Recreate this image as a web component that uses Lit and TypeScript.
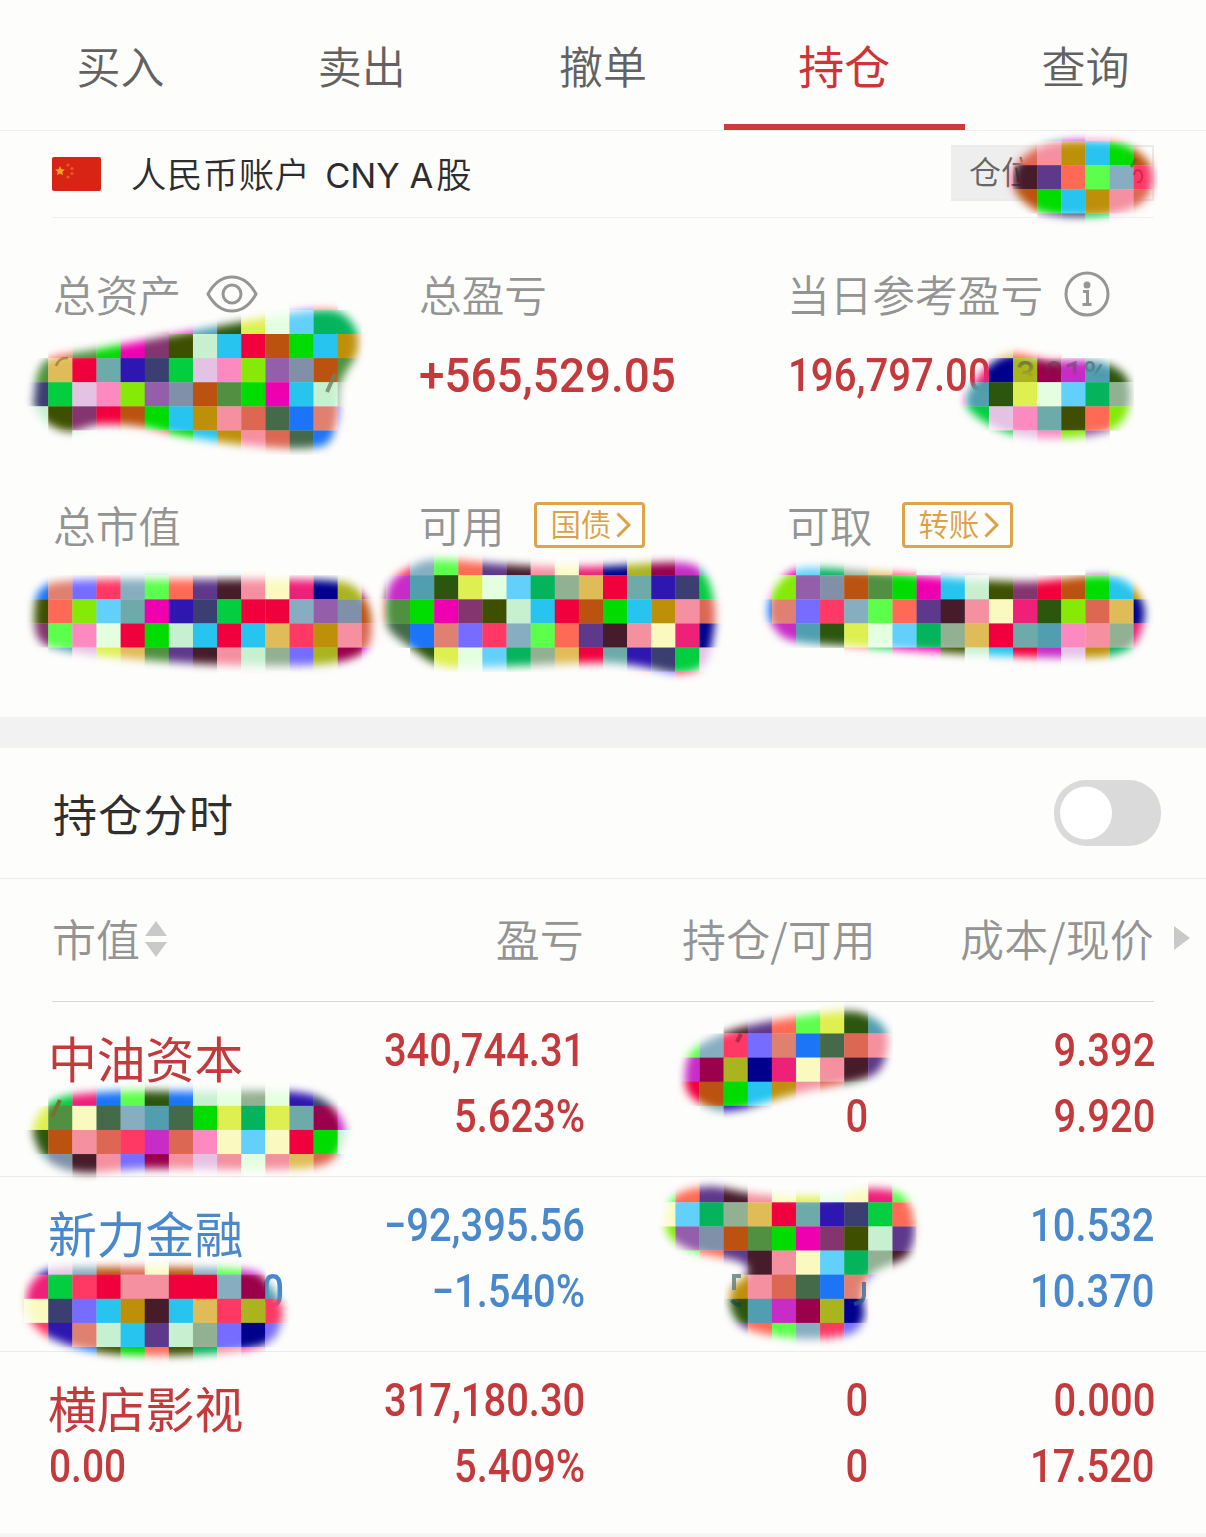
import { LitElement, html, svg, css } from "lit";
import { customElement, property } from "lit/decorators.js";

const CELL = 24.12;
const ROW_OFFSET = -3.7;

const PALETTE: Record<string, string> = {
  a: "#f0003c", b: "#bc5210", c: "#00dc00", d: "#ee00b0", e: "#84346e", f: "#3e5000",
  g: "#c6f0d0", h: "#26c4ee", i: "#be900a", j: "#f490a0", k: "#dc6854", l: "#446a4a",
  m: "#1c74f6", n: "#e08070", o: "#766cff", p: "#ff3864", q: "#86aec0", r: "#5cff4c",
  s: "#ff6a56", t: "#5e388a", u: "#461c2a", v: "#fafac0", w: "#ee2078", x: "#00008c",
  y: "#aab41e", z: "#9a004c", A: "#c82cc6", B: "#509eb0", C: "#2c560e", D: "#def050",
  E: "#e4ffe0", F: "#62d0fa", G: "#04b45c", H: "#92b092", I: "#e0bc58", J: "#6eaaaa",
  K: "#2e16b0", L: "#3a3e70", M: "#02ce40", N: "#e4c2e4", O: "#fc8ac0", P: "#84ea06",
  Q: "#945eaa", R: "#8090a8", S: "#509040",
};

interface Patch { col: number; row: number; cells: string[]; outline: number[][]; }

const PATCHES: Patch[] = [
  { col: 1, row: 12, cells: [
      "...........os..", "....vzABCDEFGG.", ".sScdefghabchij", "SIaJKLMNOPQRbSc",
      "LMNOPQRbScdhgH.", "gfeabchijklmno.", ".fghskchijklmo."],
    outline: [[28,394],[32,370],[48,352],[100,342],[200,323],[260,312],[310,304],[342,306],[362,327],[363,355],[347,385],[344,420],[332,448],[300,455],[240,451],[180,442],[140,433],[100,431],[70,438],[43,428],[28,408]] },
  { col: 41, row: 5, cells: [".qBAOs.", "kkjihcb", "putsrqp", "pbchijk", "..tLMNj"],
    outline: [[1006,178],[1016,155],[1045,138],[1085,134],[1125,138],[1152,156],[1159,180],[1150,204],[1120,219],[1075,223],[1035,217],[1012,198]] },
  { col: 39, row: 14, cells: ["..Isp...", "wwxyzABC", "ABCDEFGH", "MMNOJfsP", "..MNOPQ."],
    outline: [[960,395],[983,362],[1013,347],[1050,354],[1100,355],[1132,374],[1135,410],[1117,434],[1070,444],[1010,440],[968,418]] },
  { col: 1, row: 23, cells: ["..DEFGHIhI.....", "mnopqrstujvwxyz", "fsPFJdKLMaaqQRb", "erOEacghahIpijk", "NBNDIStujgHoyzA", ".......u.jgHo.."],
    outline: [[28,612],[36,585],[70,574],[200,573],[330,574],[365,588],[378,620],[370,655],[330,670],[250,672],[150,667],[60,656],[33,642]] },
  { col: 15, row: 22, cells: ["..m............", ".pqrstujvwxyzAB", "uABCDEFGHIaJKLM", "bScdefghabchijk", "llmnopqrstujvwx", "..CDEFGHIaJKLMN", "...........sopk"],
    outline: [[379,605],[386,578],[410,560],[440,553],[520,559],[600,560],[680,556],[709,569],[721,605],[719,640],[709,669],[680,680],[640,673],[600,669],[500,673],[440,672],[403,650],[383,632]] },
  { col: 31, row: 23, cells: [".dFGHIpgottt..QPM", "OPQRbScdhgfeabchi", "mnopqrstujvwCPkIx", "AABCDEFGHIaJBOjHw", "....sMddfghaANiGo"],
    outline: [[762,605],[773,580],[800,562],[870,565],[960,572],[1030,575],[1100,569],[1134,579],[1151,610],[1140,647],[1110,662],[1050,664],[960,660],[860,653],[790,647],[766,627]] },
  { col: 1, row: 44, cells: ["...mrCmgEHEKL.", ".MwmrCmgEHEKL.", "DSvlqBlcDGDJzA", "CbjkpAkOvFvacg", "JRujozjNjEjIko", ".Rujozj......."],
    outline: [[27,1135],[34,1110],[60,1091],[120,1085],[200,1085],[290,1085],[330,1096],[351,1125],[346,1152],[325,1171],[270,1176],[150,1175],[80,1179],[43,1165]] },
  { col: 28, row: 41, cells: ["......DC.", "..utsrDCB", "rqponmlkj", "AzyxwvjutI".slice(0, 9), "abchijklm", ".JKL....."],
    outline: [[679,1070],[689,1045],[730,1024],[780,1013],[840,1005],[870,1009],[892,1028],[892,1058],[872,1083],[800,1099],[740,1116],[710,1115],[683,1097]] },
  { col: 27, row: 48, cells: ["rst......wr.", "rstujvDEvwr.", "vFGHIaJKLMsI", "PQRbScdefgtj", "rrstujvFGHu.", "...ijklmnoo.", "...CBAzyxj..", "...tsrqpoo.."],
    outline: [[660,1215],[672,1190],[710,1180],[760,1188],[830,1190],[870,1182],[907,1190],[921,1225],[912,1260],[880,1276],[869,1291],[870,1320],[852,1340],[800,1345],[745,1335],[725,1312],[726,1285],[740,1269],[690,1257],[664,1240]] },
  { col: 0, row: 52, cells: [".KNqbkvbqrA.", "ywMpajjaaqzB", "IvLohiuhIpyp", "ppKnghtgHoxo", "..mmfcsfGjw."],
    outline: [[20,1305],[25,1281],[48,1263],[100,1261],[170,1261],[250,1264],[273,1279],[289,1310],[277,1344],[240,1357],[170,1362],[100,1359],[50,1345],[26,1326]] },
];

/* Closed Catmull-Rom curve through the outline points. */
function smooth(points: number[][]): string {
  const n = points.length;
  let d = `M${points[0][0]} ${points[0][1]}`;
  for (let i = 0; i < n; i++) {
    const p0 = points[(i - 1 + n) % n], p1 = points[i], p2 = points[(i + 1) % n], p3 = points[(i + 2) % n];
    d += `C${p1[0] + (p2[0] - p0[0]) / 6} ${p1[1] + (p2[1] - p0[1]) / 6} ${p2[0] - (p3[0] - p1[0]) / 6} ${p2[1] - (p3[1] - p1[1]) / 6} ${p2[0]} ${p2[1]}`;
  }
  return d + "Z";
}

@customElement("mosaic-layer")
class MosaicLayer extends LitElement {
  static styles = css`
    :host { display: block; pointer-events: none; }
    svg { display: block; }
    .ghost { font: 500 35px Roboto, "Liberation Sans", sans-serif; }
  `;
  render() {
    return html`<svg width="1206" height="1537" viewBox="0 0 1206 1537">
      <defs>
        <filter id="feather" filterUnits="userSpaceOnUse" x="0" y="0" width="1206" height="1537" color-interpolation-filters="sRGB"><feGaussianBlur stdDeviation="4.5" /></filter>
        <linearGradient id="fade" x1="0" y1="0" x2="0" y2="1">
          <stop offset="0.15" stop-color="#444" stop-opacity="0.6" /><stop offset="0.58" stop-color="#444" stop-opacity="0" />
        </linearGradient>
      </defs>
      ${PATCHES.map((p, n) => svg`
        <mask id="m${n}" maskUnits="userSpaceOnUse" x="0" y="0" width="1206" height="1537">
          <rect width="1206" height="1537" fill="#000" />
          <path d=${smooth(p.outline)} fill="#fff" stroke="#000" stroke-width="13" filter="url(#feather)" />
        </mask>
        <g mask="url(#m${n})">
          ${p.cells.map((line, r) => [...line].map((key, c) => key === "." ? null : svg`
            <rect x=${(p.col + c) * CELL} y=${(p.row + r) * CELL + ROW_OFFSET} width=${CELL + 0.3} height=${CELL + 0.3} fill=${PALETTE[key]} />`))}
        </g>`)}
      <text class="ghost" x="1016" y="386" textLength="92" lengthAdjust="spacingAndGlyphs" fill="url(#fade)">3.91%</text>
      <g fill="none" stroke-width="4">
        <path d="M56 366q3-9 12-8" stroke="#96763a" stroke-width="2.5" opacity=".7" />
        <path d="M335 374l-8 18" stroke="#70806a" opacity=".8" />
        <path d="M60 1100l-8 17" stroke="#7c702c" />
        <path d="M741 1034l-4 8" stroke="#a02040" opacity=".7" />
        <path d="M741 1276h-7v14" stroke="#5f7a80" opacity=".8" />
        <path d="M732 1300q3 5 9 5" stroke="#12404a" opacity=".6" />
        <path d="M864 1282v14q-1 7-10 8" stroke="#285a92" opacity=".7" />
        <path d="M1136 159l-5 8" stroke="#3a7424" stroke-width="3" opacity=".7" />
        <path d="M1134 175q1-5 4-5q5 1 4 8q-1 5-5 4" stroke="#c02050" stroke-width="2" opacity=".7" />
      </g>
    </svg>`;
  }
}

@customElement("link-chip")
class LinkChip extends LitElement {
  @property() label = "";
  static styles = css`
    :host { display: flex; align-items: center; justify-content: space-between; box-sizing: border-box; width: 111px; height: 46px;
      padding: 0 11px 0 13px; border: 3px solid #dfa348; border-radius: 4px; color: #dca045; font-size: 30.5px; line-height: 40px; }
    span { margin-top: -4px; }
    svg { display: block; }
  `;
  render() {
    return html`<span>${this.label}</span>
      <svg width="15" height="26" viewBox="0 0 15 26"><path d="M1.5 1.5L13 13L1.5 24.5" fill="none" stroke="#dca045" stroke-width="3" /></svg>`;
  }
}

interface Holding { name: string; value: string; pl: string; pct: string; held: string; free: string; cost: string; price: string; down?: boolean; }

const HOLDINGS: Holding[] = [
  { name: "中油资本", value: "", pl: "340,744.31", pct: "5.623%", held: "", free: "0", cost: "9.392", price: "9.920" },
  { name: "新力金融", value: "0", pl: "−92,395.56", pct: "−1.540%", held: "", free: "", cost: "10.532", price: "10.370", down: true },
  { name: "横店影视", value: "0.00", pl: "317,180.30", pct: "5.409%", held: "0", free: "0", cost: "0.000", price: "17.520" },
];

@customElement("app-root")
class AppRoot extends LitElement {
  static styles = css`
    :host { display: block; position: relative; width: 1206px; height: 1537px; overflow: hidden; background: #fdfdfc; color: #333;
      font-family: "Noto Sans CJK SC", sans-serif; font-weight: 350; }
    svg { display: block; }
    .tabs { display: grid; grid-template-columns: repeat(5, 1fr); height: 131px; box-sizing: border-box; border-bottom: 1px solid #eee; }
    .tab { display: flex; align-items: center; justify-content: center; box-sizing: border-box; height: 130px; padding-top: 5px;
      font-size: 44px; color: #626262; border-bottom: 6px solid transparent; }
    .tab.on { font-size: 46px; color: #cf3438; font-weight: 400; border-bottom-color: #cc3a3e; padding-top: 3px; }
    .account { display: flex; align-items: center; justify-content: space-between; height: 86px; margin: 0 52px; border-bottom: 1px solid #f1f1f1; }
    .who { display: flex; align-items: center; gap: 30px; font-size: 35.4px; letter-spacing: 0.5px; color: #2d2d2d; }
    .title { margin-top: -3px; white-space: pre; }
    .latin { font-family: Inter, Roboto, sans-serif; font-weight: 400; font-size: 34.5px; margin: 0 3px 0 5px; letter-spacing: 0; }
    .badge { display: flex; align-items: center; box-sizing: border-box; width: 203px; height: 56px; padding: 0 0 6px 18px; margin-top: -3px;
      border: 2px solid #ebebeb; border-left: 0; background: linear-gradient(90deg, #eee 90px, #fdfdfc 90px); font-size: 32px; color: #666; }
    .summary { display: grid; grid-template-columns: 366px 368px 1fr; grid-template-rows: 231px 1fr; height: 499px; box-sizing: border-box; padding: 50px 0 0 54px; }
    .label { display: flex; align-items: center; height: 52px; font-size: 42.7px; color: #949494; white-space: nowrap; }
    .label span { margin: -2px 0 0 -1px; }
    .eye { margin-left: 25px; }
    .info { margin-left: 21px; }
    .chip { margin-left: 30px; }
    .num { display: block; font-family: Roboto, "Liberation Sans", sans-serif; font-weight: 500; font-size: 46px; line-height: 66px; color: #c4393c; white-space: nowrap; width: max-content; }
    .summary .num { margin-top: 23px; transform-origin: left; }
    .summary .wide { font-size: 48px; margin-left: -1px; transform: scaleX(0.955); }
    .summary .narrow { transform: scaleX(0.873); margin-top: 22px; }
    .band { height: 31px; background: #f2f2f2; }
    .intraday { display: flex; align-items: center; justify-content: space-between; height: 130px; padding: 0 45px 0 53px; font-size: 44px; letter-spacing: 1.3px; color: #2f2f2f; font-weight: 400; border-bottom: 1px solid #ececec; }
    .grid { display: grid; grid-template-columns: 200px 334px 292px 278px; margin-left: 50px; }
    .head { display: flex; height: 122px; color: #949494; font-size: 44px; }
    .head .grid { flex: none; width: 1104px; align-items: center; padding-bottom: 5px; }
    .head .right { text-align: right; white-space: nowrap; letter-spacing: 0.15px; }
    .sort { display: flex; align-items: center; gap: 5px; padding-left: 2px; }
    .sort svg { margin-top: 3px; }
    .more { align-self: center; margin-left: 20px; margin-top: -4px; }
    .rule { height: 1px; margin: 0 52px; background: #d9d9d9; }
    .holding { height: 174px; border-bottom: 1px solid #ebebeb; color: #c4393c; }
    .holding:last-of-type { border-bottom-color: transparent; }
    .holding.down, .holding.down .num { color: #4a88cc; }
    .cell { display: flex; flex-direction: column; align-items: flex-end; padding-top: 15px; }
    .cell.first { align-items: flex-start; }
    .cell .num { height: 66px; transform: scaleX(0.867); transform-origin: right; margin-right: -1px; }
    .cell.first .num { transform-origin: left; margin-left: -1px; transform: scaleX(0.845); }
    .cell.first .name { margin-left: -2px; }
    .down .first .num.val { margin-left: 212px; }
    .cell.held { padding-right: 9px; }
    .name { height: 66px; line-height: 79px; font-size: 48.8px; white-space: nowrap; font-weight: 400; }
    .foot { height: 8px; margin-top: 6px; background: linear-gradient(#f8f8f7, #efefed); }
    .overlay { position: absolute; left: 0; top: 0; }
  `;

  render() {
    return html`
      <nav class="tabs">
        ${["买入", "卖出", "撤单", "持仓", "查询"].map((t) => html`<div class="tab ${t === "持仓" ? "on" : ""}">${t}</div>`)}
      </nav>
      <div class="account">
        <div class="who">
          <svg width="49" height="34" viewBox="0 0 49 34">
            <rect width="49" height="34" rx="2" fill="#d82414" />
            <path d="M8 9l1.4 3.2 3.5.3-2.6 2.3.8 3.4L8 16.4l-3.1 1.8.8-3.4-2.6-2.3 3.5-.3z" fill="#f7a428" />
            <g fill="#ec5a22"><circle cx="16" cy="8" r="1.6" /><circle cx="20" cy="11.5" r="1.6" /><circle cx="20" cy="16.5" r="1.6" /><circle cx="16" cy="20" r="1.6" /></g>
          </svg>
          <span class="title">人民币账户<span class="latin"> CNY A</span>股</span>
        </div>
        <div class="badge">仓位</div>
      </div>
      <section class="summary">
        <div>
          <div class="label"><span>总资产</span>
            <svg class="eye" width="52" height="38" viewBox="0 0 52 38" fill="none" stroke="#969696" stroke-width="3">
              <path d="M2 19C8 8 16 2 26 2s18 6 24 17C44 30 36 36 26 36S8 30 2 19z" /><circle cx="26" cy="19" r="9" />
            </svg>
          </div>
        </div>
        <div><div class="label"><span>总盈亏</span></div><span class="num wide">+565,529.05</span></div>
        <div>
          <div class="label"><span>当日参考盈亏</span>
            <svg class="info" width="46" height="46" viewBox="0 0 46 46" fill="none" stroke="#969696" stroke-width="3">
              <circle cx="23" cy="23" r="21" /><circle cx="23" cy="14" r="3.5" fill="#969696" stroke="none" />
              <path d="M19 20.5h4.5V33M18.500 33.500h9" />
            </svg>
          </div>
          <span class="num narrow">196,797.00</span>
        </div>
        <div><div class="label"><span>总市值</span></div></div>
        <div><div class="label"><span>可用</span><link-chip class="chip" label="国债"></link-chip></div></div>
        <div><div class="label"><span>可取</span><link-chip class="chip" label="转账"></link-chip></div></div>
      </section>
      <div class="band"></div>
      <div class="intraday">持仓分时
        <svg width="107" height="66" viewBox="0 0 107 66"><rect width="107" height="66" rx="32" fill="#dadada" /><ellipse cx="32" cy="33" rx="26" ry="26.500" fill="#fff" /></svg>
      </div>
      <div class="head">
        <div class="grid">
          <div class="sort">市值
            <svg width="22" height="36" viewBox="0 0 22 36" fill="#c9c9c9"><path d="M11 0L22 15H0zM11 36L0 21H22z" /></svg>
          </div>
          <div class="right">盈亏</div>
          <div class="right">持仓/可用</div>
          <div class="right">成本/现价</div>
        </div>
        <svg class="more" width="16" height="24" viewBox="0 0 16 24" fill="#c9c9c9"><path d="M0 0L16 12L0 24z" /></svg>
      </div>
      <div class="rule"></div>
      ${HOLDINGS.map((h) => html`
        <div class="holding ${h.down ? "down" : ""}">
          <div class="grid">
            <div class="cell first"><span class="name">${h.name}</span><span class="num val">${h.value}</span></div>
            <div class="cell"><span class="num">${h.pl}</span><span class="num">${h.pct}</span></div>
            <div class="cell held"><span class="num">${h.held}</span><span class="num">${h.free}</span></div>
            <div class="cell"><span class="num">${h.cost}</span><span class="num">${h.price}</span></div>
          </div>
        </div>`)}
      <footer class="foot"></footer>
      <mosaic-layer class="overlay"></mosaic-layer>
    `;
  }
}
